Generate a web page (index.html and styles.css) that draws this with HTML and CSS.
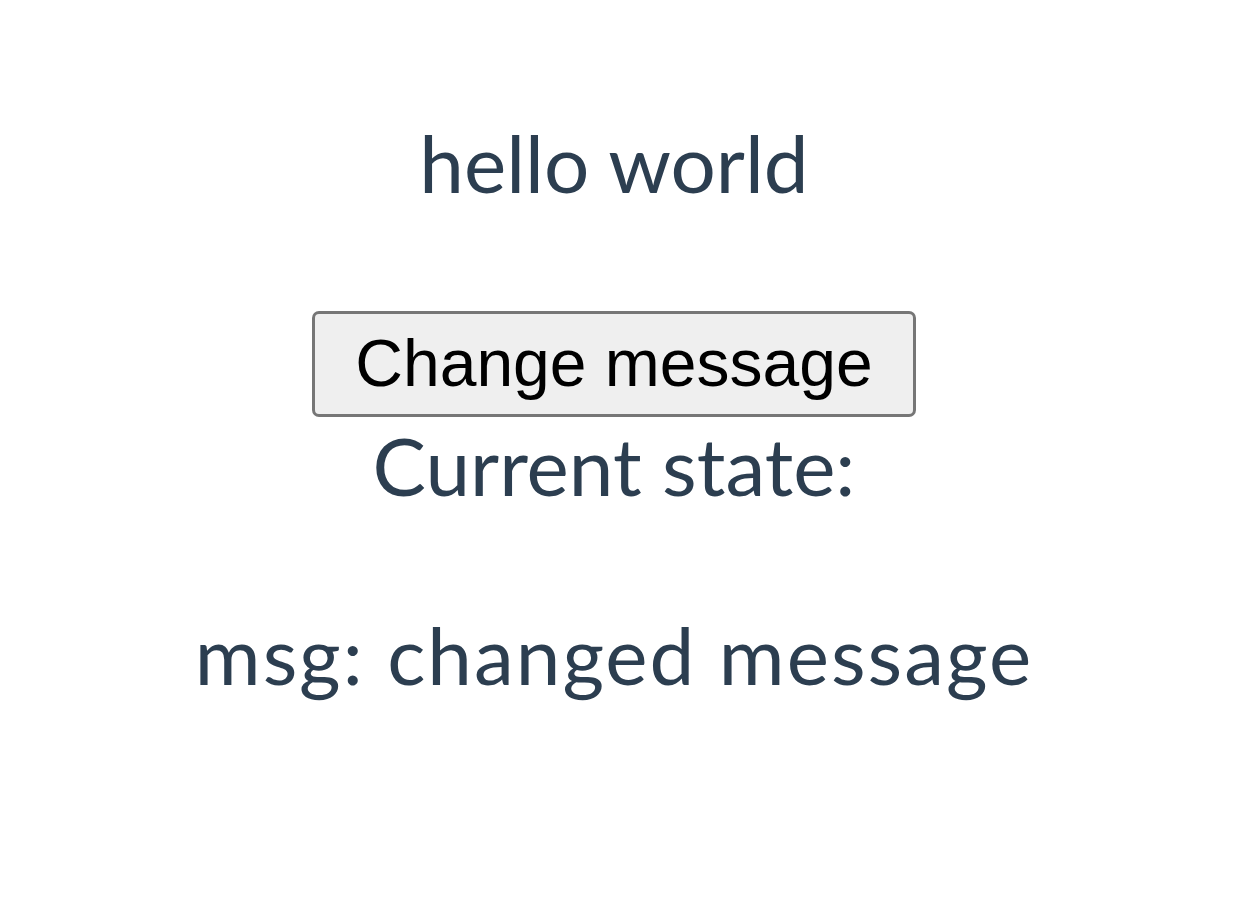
FILE: index.html
```html
<!DOCTYPE html>
<html>
<head>
  <title>Hello World</title>
  <meta name="viewport" content="width=device-width, initial-scale=1" />
  <link rel="stylesheet" href="styles.css">
</head>
<body>
  <div id="app">
    <div class="hello">hello world</div>
    <button class="change-btn" type="button">Change message</button>
    <div class="state">
      <div>Current state:</div>
      <div class="spacer"></div>
      <div class="msg">msg: changed message</div>
    </div>
  </div>
</body>
</html>
```

FILE: styles.css
```css
body { margin: 0; background: #fff; }
#app { font-family: Lato, "Noto Sans", sans-serif; color: #2c3e50; text-align: center; padding-top: 114px; margin-right: 26px; }
.hello { font-size: 80px; line-height: 96px; margin-bottom: 101px; }
.change-btn { display: block; margin: 0 auto; font-family: "Liberation Sans", Arial, sans-serif; font-size: 66px; color: #000; background: #efefef; border: 3px solid #767676; border-radius: 7px; padding: 11px 40px 12px; line-height: 77px; }
.state { font-size: 80px; line-height: 96px; }
.spacer { height: 93px; }
.msg { letter-spacing: 2px; }
```
